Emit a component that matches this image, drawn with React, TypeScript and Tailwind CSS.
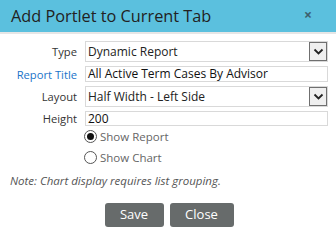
import React from "react";

const Chevron = () => (
  <svg width="11" height="8" viewBox="0 0 11 8" fill="none">
    <path d="M1.5 1.5 L5.5 5.5 L9.5 1.5" stroke="#222" strokeWidth="1.8" />
  </svg>
);

const Select = ({ value }: { value: string }) => (
  <div className="h-[21px] w-[243px] border border-[#d9d9d9] flex items-center justify-between bg-white">
    <span className="pl-[2px] text-[12px] text-[#222] leading-none">{value}</span>
    <div className="h-[19px] w-[18px] border border-[#6f6f6f] bg-[#efefef] flex items-center justify-center">
      <Chevron />
    </div>
  </div>
);

const Input = ({ value, h }: { value: string; h: string }) => (
  <div className={`${h} w-[243px] border border-[#d9d9d9] flex items-center bg-white`}>
    <span className="pl-[2px] text-[12px] text-[#111] leading-none">{value}</span>
  </div>
);

const Radio = ({ checked, label }: { checked?: boolean; label: string }) => (
  <div className="h-[21px] flex items-center gap-[3px]">
    <div className="w-[13px] h-[13px] rounded-full border border-[#555] flex items-center justify-center bg-white">
      {checked && <div className="w-[7px] h-[7px] rounded-full bg-[#111]" />}
    </div>
    <span className="text-[11.5px] text-[#666] leading-none">{label}</span>
  </div>
);

const labelCls = "text-right pr-[8px] text-[11.2px] leading-[15px]";

export default function App() {
  return (
    <div className="w-[336px] h-[238px] bg-white" style={{ fontFamily: '"Open Sans", sans-serif' }}>
      <div className="h-[32px] bg-[#5bc0de] flex items-center justify-between pl-[11px] pr-[24px]">
        <span className="text-[16.3px] text-[#222]">Add Portlet to Current Tab</span>
        <span className="text-[14px] font-bold text-[#3d5f6e] leading-none mt-[-3px]">×</span>
      </div>
      <div className="h-[2px] bg-[#e6e6e6]" />
      <div className="pt-[7px]">
        <div className="grid grid-cols-[85px_243px] gap-y-[4px] items-center">
          <div className={`${labelCls} text-[#333]`}>Type</div>
          <Select value="Dynamic Report" />
          <div className={`${labelCls} text-[#1a74c9]`}>Report Title</div>
          <Input value="All Active Term Cases By Advisor" h="h-[16px]" />
          <div className={`${labelCls} text-[#333]`}>Layout</div>
          <Select value="Half Width - Left Side" />
          <div className={`${labelCls} text-[#333]`}>Height</div>
          <Input value="200" h="h-[15px]" />
        </div>
        <div className="pl-[84px]">
          <Radio checked label="Show Report" />
          <Radio label="Show Chart" />
        </div>
        <div className="pl-[10px] mt-[5px] text-[11.5px] italic text-[#555] leading-[16px]">
          Note: Chart display requires list grouping.
        </div>
        <div className="flex justify-center gap-[6px] mt-[14px] pl-[2px]">
          <button className="h-[24px] w-[59px] rounded-[3px] bg-[#676b6b] text-white text-[13px]">Save</button>
          <button className="h-[24px] w-[64px] rounded-[3px] bg-[#676b6b] text-white text-[13px]">Close</button>
        </div>
      </div>
    </div>
  );
}
